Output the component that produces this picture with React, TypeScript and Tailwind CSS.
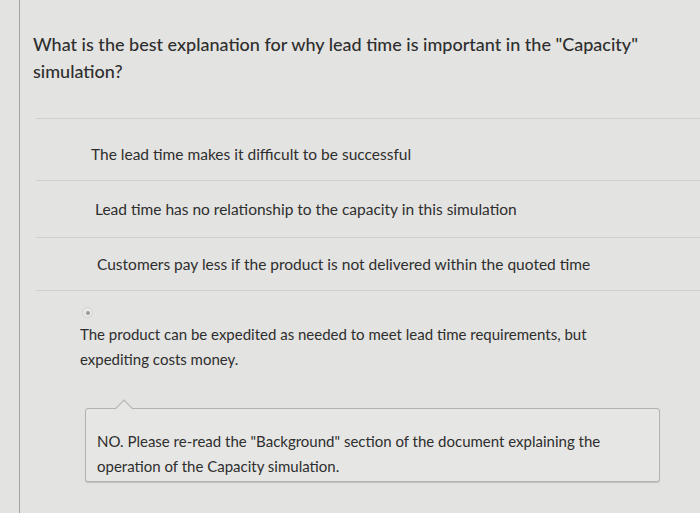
const options = [
    { text: "The lead time makes it difficult to be successful", h: "h-[62px] pt-[26px] pl-[55px]" },
    { text: "Lead time has no relationship to the capacity in this simulation", h: "h-[57px] pt-[19px] pl-[59px]" },
    { text: "Customers pay less if the product is not delivered within the quoted time", h: "h-[53px] pt-[17px] pl-[61px]" },
]

const App = () => {
    return (
        <div
            className="w-[700px] h-[513px] overflow-hidden bg-[#e3e3e1] text-[#2e2e2e]"
            style={{ fontFamily: "Lato, 'Open Sans', sans-serif" }}
        >
            <div className="ml-[19px] h-full border-l border-[#a3a3a1] pt-[31px]">
                {/* Question */}
                <h2 className="pl-[13px] pr-[40px] text-[18px] leading-[27px] font-medium">
                    What is the best explanation for why lead time is important in the "Capacity" simulation?
                </h2>

                {/* Answers */}
                <div className="mt-[33px] ml-[16px]">
                    {options.map((opt) => (
                        <div key={opt.text} className={`border-t border-[#cfcfcd] text-[15.5px] leading-[18px] ${opt.h}`}>
                            {opt.text}
                        </div>
                    ))}

                    {/* Selected answer */}
                    <div className="border-t border-[#cfcfcd] pt-[16px] pl-[44px]">
                        <div className="ml-[2px] flex h-[11px] w-[11px] items-center justify-center rounded-full border border-[#d2d2d0] bg-[#e9e9e7]">
                            <div className="h-[4px] w-[4px] rounded-full bg-[#9a9a98]" />
                        </div>
                        <p className="mt-[4px] pr-[90px] text-[15px] leading-[25px]">
                            The product can be expedited as needed to meet lead time requirements, but expediting costs money.
                        </p>
                    </div>

                    {/* Feedback */}
                    <div className="relative mt-[36px] ml-[49px] mr-[40px] rounded-[3px] border border-[#b2b2b0] bg-[#e6e6e4] px-[11px] pt-[20px] pb-[2px] shadow-[0_1px_1px_rgba(0,0,0,0.15)]">
                        <div className="absolute -top-[7px] left-[32px] h-[12px] w-[12px] rotate-45 border-l border-t border-[#b2b2b0] bg-[#e6e6e4]" />
                        <p className="text-[15px] leading-[25px]">
                            NO. Please re-read the "Background" section of the document explaining the operation of the Capacity simulation.
                        </p>
                    </div>
                </div>
            </div>
        </div>
    )
}

export default App
